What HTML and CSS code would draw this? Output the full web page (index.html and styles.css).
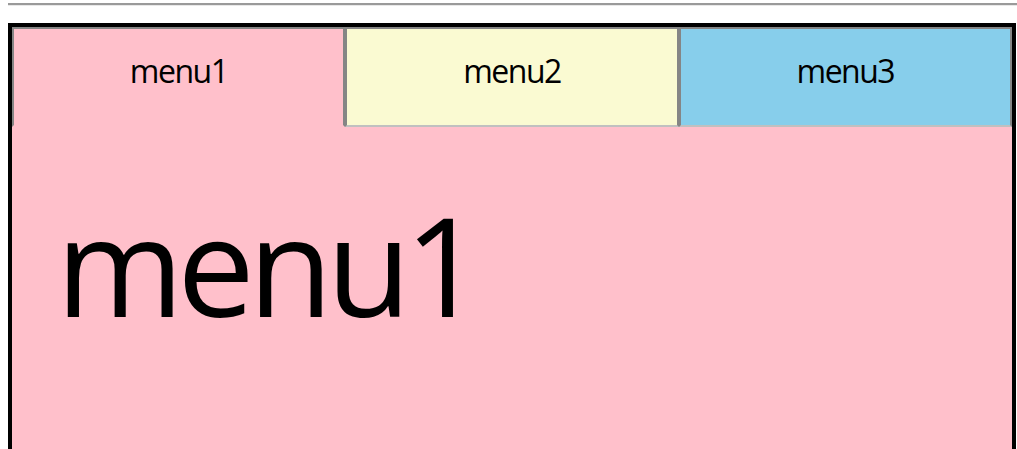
FILE: index.html
```html
<!DOCTYPE html>
<html lang="en">
<head>
<meta charset="utf-8">
<title>Tabs</title>
<link rel="stylesheet" href="styles.css">
</head>
<body>
<div class="rule"></div>
<div class="box">
  <div class="tabs">
    <div class="tab tab-pink active">menu1</div>
    <div class="tab tab-yellow">menu2</div>
    <div class="tab tab-blue">menu3</div>
  </div>
  <div class="content">menu1</div>
</div>
</body>
</html>
```
FILE: styles.css
```css
html, body {
  margin: 0;
  padding: 0;
  background: #ffffff;
  overflow: hidden;
}
body {
  font-family: "Open Sans", "Noto Sans", sans-serif;
  color: #000;
}
.rule {
  margin: 3px 0 0 8px;
  height: 0;
  border-top: 2px solid #9a9a9a;
  border-bottom: 1px solid #e8e8e8;
}
.box {
  margin: 17px 0 0 8px;
  width: 1000px;
  border: 4px solid #000;
}
.tabs {
  display: grid;
  grid-template-columns: 1fr 1fr 1fr;
}
.tab {
  box-sizing: border-box;
  height: 100px;
  padding-top: 20px;
  text-align: center;
  font-size: 32px;
  letter-spacing: -1.5px;
  border: 2px solid #858585;
  border-bottom-color: #c0c0c0;
}
.tab-pink { background: #ffc0cb; }
.tab-yellow { background: #fafad2; }
.tab-blue { background: #87ceeb; }
.tab.active { border-bottom-color: #ffc0cb; }
.content {
  background: #ffc0cb;
  height: 400px;
  padding: 42px 44px 40px;
  font-size: 138px;
  letter-spacing: -6.5px;
}
```
